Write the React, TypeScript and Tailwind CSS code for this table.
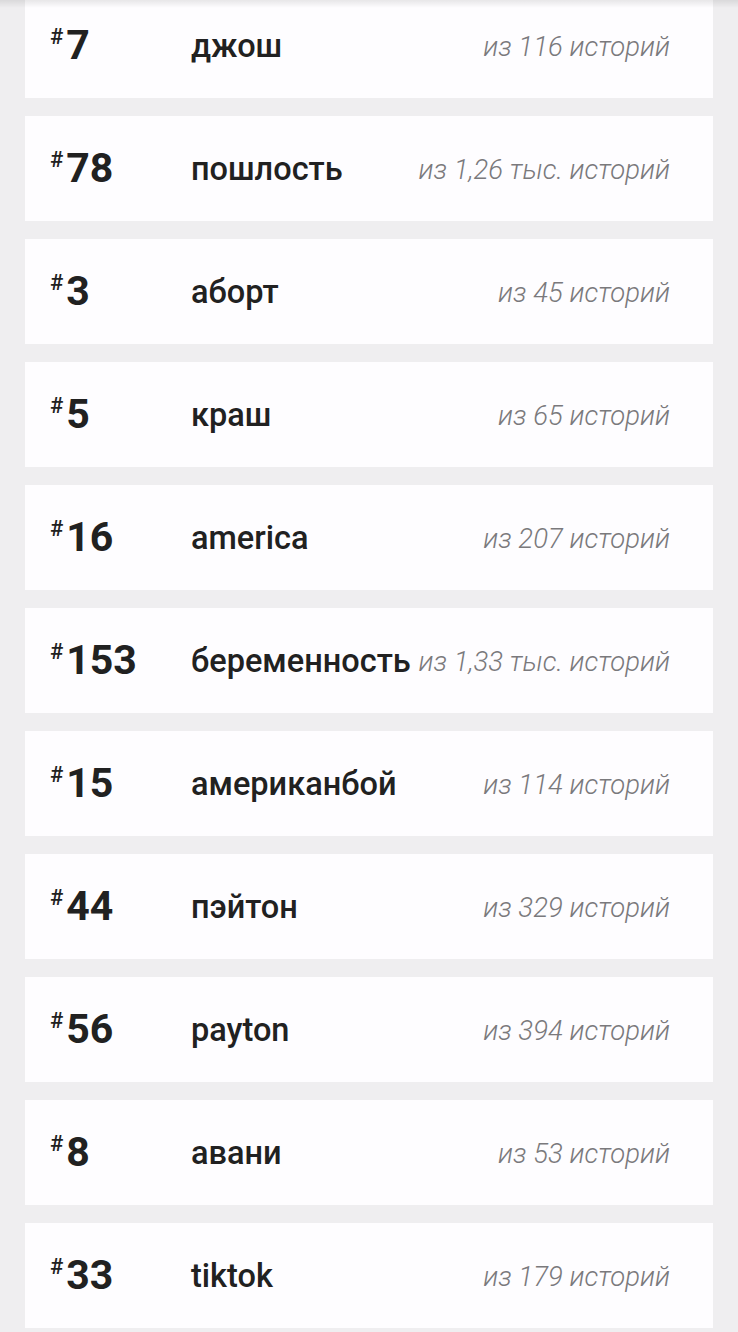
import React from "react";

const rows: [string, string, string][] = [
  ["7", "джош", "из 116 историй"],
  ["78", "пошлость", "из 1,26 тыс. историй"],
  ["3", "аборт", "из 45 историй"],
  ["5", "краш", "из 65 историй"],
  ["16", "america", "из 207 историй"],
  ["153", "беременность", "из 1,33 тыс. историй"],
  ["15", "американбой", "из 114 историй"],
  ["44", "пэйтон", "из 329 историй"],
  ["56", "payton", "из 394 историй"],
  ["8", "авани", "из 53 историй"],
  ["33", "tiktok", "из 179 историй"],
];

export default function App() {
  return (
    <div
      className="relative h-[1332px] overflow-hidden bg-[#efeef0]"
      style={{ fontFamily: "Roboto, 'Noto Sans', sans-serif" }}
    >
      <div className="mt-[-7px] flex flex-col gap-[18px]">
        {rows.map(([n, name, count], i) => (
          <div
            key={i}
            className="mx-[25px] flex h-[105px] items-center bg-[#fefdff] pl-[25px] pr-[43px]"
          >
            <div className="flex w-[141px] shrink-0 items-start text-[#212121]">
              <span className="mt-[1px] text-[22px] font-medium leading-none">#</span>
              <span className="ml-[3px] text-[41px] font-bold leading-none">{n}</span>
            </div>
            <div className="mt-[2px] whitespace-nowrap text-[32.5px] font-medium leading-none text-[#212121]">
              {name}
            </div>
            <div className="ml-auto mt-[3px] whitespace-nowrap pl-[6px] text-[27.5px] font-light italic leading-none text-[#7a797c]">
              {count}
            </div>
          </div>
        ))}
      </div>
      <div className="pointer-events-none absolute left-0 right-0 top-0 h-[8px] bg-gradient-to-b from-[rgba(0,0,0,0.09)] to-transparent" />
    </div>
  );
}
